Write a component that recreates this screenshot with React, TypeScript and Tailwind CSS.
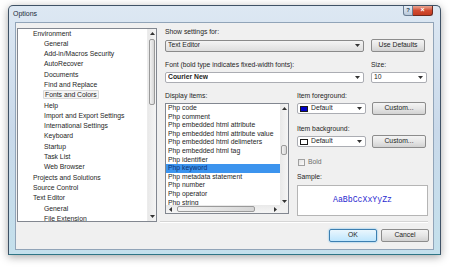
import React from 'react';

const tree: [string, number][] = [
  ['Environment', 0],
  ['General', 1],
  ['Add-in/Macros Security', 1],
  ['AutoRecover', 1],
  ['Documents', 1],
  ['Find and Replace', 1],
  ['Fonts and Colors', 1],
  ['Help', 1],
  ['Import and Export Settings', 1],
  ['International Settings', 1],
  ['Keyboard', 1],
  ['Startup', 1],
  ['Task List', 1],
  ['Web Browser', 1],
  ['Projects and Solutions', 0],
  ['Source Control', 0],
  ['Text Editor', 0],
  ['General', 1],
  ['File Extension', 1],
];

const items = [
  'Php code',
  'Php comment',
  'Php embedded html attribute',
  'Php embedded html attribute value',
  'Php embedded html delimeters',
  'Php embedded html tag',
  'Php identifier',
  'Php keyword',
  'Php metadata statement',
  'Php number',
  'Php operator',
  'Php string',
];

function Tri({ dir = 'down' }: { dir?: 'down' | 'up' | 'left' | 'right' }) {
  const d = {
    down: 'M0 0h5L2.5 3z',
    up: 'M0 3h5L2.5 0z',
    left: 'M3 0v5L0 2.5z',
    right: 'M0 0v5L3 2.5z',
  }[dir];
  const vert = dir === 'down' || dir === 'up';
  return (
    <svg width={vert ? 5 : 3} height={vert ? 3 : 5} viewBox={vert ? '0 0 5 3' : '0 0 3 5'}>
      <path d={d} fill="#333" />
    </svg>
  );
}

function Combo({ children, className = '', gray = false }: { children: React.ReactNode; className?: string; gray?: boolean }) {
  return (
    <div
      className={`flex items-center justify-between pl-[2px] pr-[3px] border rounded-[2px] ${
        gray ? 'border-[#8a8a8a] bg-gradient-to-b from-[#f4f4f4] to-[#dedede]' : 'border-[#abadb3] bg-white'
      } ${className}`}
    >
      <div className="flex items-center gap-[3px] truncate">{children}</div>
      <Tri />
    </div>
  );
}

function Btn({ label, className = '', primary = false }: { label: string; className?: string; primary?: boolean }) {
  return (
    <div
      className={`flex items-center justify-center h-[13px] rounded-[2px] border ${
        primary
          ? 'border-[#3c7fb1] bg-gradient-to-b from-[#eaf6fd] to-[#bee6fd] shadow-[0_0_2px_#5ab4e8]'
          : 'border-[#8c8c8c] bg-gradient-to-b from-[#f4f4f4] via-[#e6e6e6] to-[#d2d2d2]'
      } ${className}`}
    >
      {label}
    </div>
  );
}

function Thumb({ className = '' }: { className?: string }) {
  return <div className={`rounded-[2px] border border-[#9a9a9a] bg-gradient-to-r from-[#f3f3f3] to-[#d6d6d6] ${className}`} />;
}

export default function App() {
  return (
    <div className="w-[450px] h-[267px] bg-white overflow-hidden pt-[5px] pl-[8px] font-['Liberation_Sans',Arial,sans-serif] text-[6.8px] text-[#1e1e1e]">
      <div className="w-[433px] h-[250px] flex flex-col rounded-t-[5px] border border-[#3f5266] border-b-[#2f7686] bg-gradient-to-b from-[#dde8f3] via-[#c9d9ea] to-[#c4e0ec] shadow-[0_2px_8px_rgba(0,0,0,0.35)]">
        {/* title bar */}
        <div className="h-[16px] flex justify-between pl-[4px] pr-[7px]">
          <span className="self-center text-[7px] text-[#1b2a3a]">Options</span>
          <div className="flex self-start">
            <div className="w-[10px] h-[10px] flex items-center justify-center text-[6px] font-bold text-[#2a3c50] rounded-bl-[3px] border border-t-0 border-[#6a7d92] bg-gradient-to-b from-[#e6eef7] to-[#b9c9db]">
              ?
            </div>
            <div className="w-[20px] h-[10px] flex items-center justify-center text-[7px] font-bold text-white rounded-br-[3px] border border-l-0 border-t-0 border-[#6b2a20] bg-gradient-to-b from-[#e9a593] via-[#d24b31] to-[#c43c22]">
              ×
            </div>
          </div>
        </div>

        {/* client area */}
        <div className="flex-1 mx-[6px] mb-[4px] border border-[#91a4b8] bg-[#f0f0f0] pl-[1px] pt-[5px] flex flex-col">
          <div className="flex gap-[8px]">
            {/* tree */}
            <div className="w-[140px] h-[194px] border border-[#828790] bg-white flex">
              <div className="flex-1 -mt-[0.5px] overflow-hidden">
                {tree.map(([t, lvl], i) => (
                  <div key={i} className={`h-[10.3px] leading-[10.3px] ${lvl ? 'pl-[25px]' : 'pl-[14px]'}`}>
                    <span
                      className={`px-[1px] ${
                        t === 'Fonts and Colors' && lvl === 1 ? 'border border-[#d9d9d9] bg-[#f5f5f5] rounded-[1px]' : ''
                      }`}
                    >
                      {t}
                    </span>
                  </div>
                ))}
              </div>
              <div className="w-[9px] flex flex-col bg-gradient-to-r from-[#e9e9e9] to-[#f5f5f5] border-l border-[#ececec]">
                <div className="h-[9px] flex items-center justify-center">
                  <Tri dir="up" />
                </div>
                <Thumb className="h-[66px] mx-[1px] mt-[1px]" />
                <div className="flex-1" />
                <div className="h-[9px] flex items-center justify-center">
                  <Tri />
                </div>
              </div>
            </div>

            {/* right pane */}
            <div className="w-[263px] flex flex-col">
              <div className="h-[8px] leading-[8px]">Show settings for:</div>
              <div className="mt-[3px] flex items-center gap-[7px] h-[13px]">
                <Combo gray className="w-[199px] h-[12px]">
                  <span>Text Editor</span>
                </Combo>
                <Btn label="Use Defaults" className="w-[54px]" />
              </div>

              <div className="mt-[9px] flex gap-[7px]">
                <div className="w-[199px] flex flex-col">
                  <div className="h-[8px] leading-[8px]">Font (bold type indicates fixed-width fonts):</div>
                  <Combo className="mt-[3px] h-[11px]">
                    <span className="font-bold">Courier New</span>
                  </Combo>
                </div>
                <div className="w-[56px] flex flex-col">
                  <div className="h-[8px] leading-[8px]">Size:</div>
                  <Combo className="mt-[3px] h-[11px]">
                    <span>10</span>
                  </Combo>
                </div>
              </div>

              <div className="mt-[9px] flex gap-[8px]">
                {/* display items */}
                <div className="w-[124px] flex flex-col">
                  <div className="h-[8px] leading-[8px]">Display items:</div>
                  <div className="mt-[3px] h-[111px] border border-[#828790] bg-white flex flex-col">
                    <div className="flex-1 flex min-h-0">
                      <div className="flex-1 overflow-hidden">
                        {items.map((t) => (
                          <div
                            key={t}
                            className={`h-[8.6px] leading-[8.6px] pl-[2px] whitespace-nowrap ${
                              t === 'Php keyword' ? 'bg-[#3c94ee] text-[#0d2f6e]' : ''
                            }`}
                          >
                            {t}
                          </div>
                        ))}
                      </div>
                      <div className="w-[8px] flex flex-col bg-gradient-to-r from-[#e9e9e9] to-[#f5f5f5]">
                        <div className="h-[8px] flex items-center justify-center">
                          <Tri dir="up" />
                        </div>
                        <div className="h-[33px]" />
                        <Thumb className="h-[10px] mx-[1px]" />
                        <div className="flex-1" />
                        <div className="h-[8px] flex items-center justify-center">
                          <Tri />
                        </div>
                      </div>
                    </div>
                    <div className="h-[8px] flex">
                      <div className="flex-1 flex items-center bg-gradient-to-b from-[#e9e9e9] to-[#f5f5f5]">
                        <div className="w-[9px] flex justify-center">
                          <Tri dir="left" />
                        </div>
                        <Thumb className="w-[78px] h-[6px] ml-[2px] bg-gradient-to-b" />
                        <div className="flex-1" />
                        <div className="w-[9px] flex justify-center">
                          <Tri dir="right" />
                        </div>
                      </div>
                      <div className="w-[8px] bg-[#f0f0f0]" />
                    </div>
                  </div>
                </div>

                {/* item colors */}
                <div className="w-[131px] flex flex-col">
                  <div className="h-[8px] leading-[8px]">Item foreground:</div>
                  <div className="mt-[2px] h-[13px] flex items-center gap-[6px]">
                    <Combo className="w-[69px] h-[11px]">
                      <span className="w-[8px] h-[6px] bg-[#0000c8] border border-[#1a1a1a]" />
                      <span>Default</span>
                    </Combo>
                    <Btn label="Custom..." className="w-[54px]" />
                  </div>
                  <div className="mt-[10px] h-[8px] leading-[8px]">Item background:</div>
                  <div className="mt-[2px] h-[13px] flex items-center gap-[6px]">
                    <Combo className="w-[69px] h-[11px]">
                      <span className="w-[8px] h-[6px] bg-white border border-[#1a1a1a]" />
                      <span>Default</span>
                    </Combo>
                    <Btn label="Custom..." className="w-[54px]" />
                  </div>
                  <div className="mt-[10px] h-[8px] flex items-center gap-[3px] pl-[1px]">
                    <span className="w-[7px] h-[7px] border border-[#a0a0a0] bg-gradient-to-br from-[#e4e4e4] to-[#fafafa]" />
                    <span className="text-[#6d6d6d]">Bold</span>
                  </div>
                  <div className="mt-[7px] h-[8px] leading-[8px]">Sample:</div>
                  <div className="mt-[4px] h-[31px] border border-[#b5b5b5] bg-white flex items-center justify-center">
                    <span className="font-['Liberation_Mono','Courier_New',monospace] text-[8.2px] text-[#2a2ad0]">AaBbCcXxYyZz</span>
                  </div>
                </div>
              </div>
              <div className="mt-[5px] -ml-[5px] h-[2px] border-t border-[#d5d5d5] border-b border-b-white" />
            </div>
          </div>

          {/* bottom buttons */}
          <div className="mt-[6px] flex justify-end gap-[4px] pr-[4px]">
            <Btn primary label="OK" className="w-[48px]" />
            <Btn label="Cancel" className="w-[48px]" />
          </div>
        </div>
      </div>
    </div>
  );
}
